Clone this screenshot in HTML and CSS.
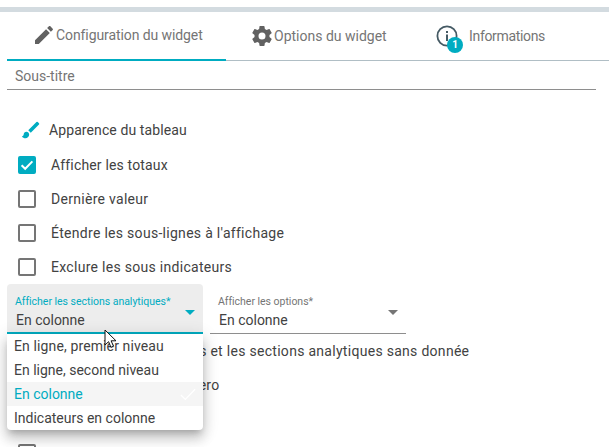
FILE: index.html
```html
<!DOCTYPE html>
<html lang="fr">
<head>
<meta charset="utf-8">
<title>Configuration du widget</title>
<link rel="stylesheet" href="styles.css">
</head>
<body>
<div class="page">
  <div class="topbar"></div>
  <nav class="tabs">
    <div class="tab tab-active">
      <svg class="tab-icon" viewBox="0 0 24 24"><path d="M20.71 7.04c.39-.39.39-1.04 0-1.41l-2.34-2.34c-.37-.39-1.02-.39-1.41 0l-1.84 1.83 3.75 3.75M3 17.25V21h3.75L17.81 9.93l-3.75-3.75L3 17.25z"/></svg>
      <span>Configuration du widget</span>
    </div>
    <div class="tab tab-options">
      <svg class="tab-icon" viewBox="0 0 24 24"><path d="M12 15.5A3.5 3.5 0 0 1 8.5 12 3.5 3.5 0 0 1 12 8.5a3.5 3.5 0 0 1 3.5 3.5 3.5 3.5 0 0 1-3.5 3.5m7.43-2.53c.04-.32.07-.64.07-.97s-.03-.66-.07-1l2.11-1.63c.19-.15.24-.42.12-.64l-2-3.46c-.12-.22-.39-.31-.61-.22l-2.49 1c-.52-.39-1.06-.73-1.69-.98l-.37-2.65A.506.506 0 0 0 14 2h-4c-.25 0-.46.18-.5.42l-.37 2.65c-.63.25-1.17.59-1.69.98l-2.49-1c-.22-.09-.49 0-.61.22l-2 3.46c-.13.22-.07.49.12.64L4.57 11c-.04.34-.07.67-.07 1s.03.65.07.97l-2.11 1.66c-.19.15-.25.42-.12.64l2 3.46c.12.22.39.3.61.22l2.49-1.01c.52.4 1.06.74 1.69.99l.37 2.65c.04.24.25.42.5.42h4c.25 0 .46-.18.5-.42l.37-2.65c.63-.26 1.17-.59 1.69-.99l2.49 1.01c.22.08.49 0 .61-.22l2-3.46c.12-.22.07-.49-.12-.64l-2.11-1.66z"/></svg>
      <span>Options du widget</span>
    </div>
    <div class="tab tab-info">
      <span class="info-icon">
        <svg viewBox="0 0 24 24"><circle cx="12" cy="12" r="9.6" fill="none" stroke="#455a64" stroke-width="1.8"/><rect x="11" y="10.5" width="2" height="6.5" fill="#455a64"/><rect x="11" y="7" width="2" height="2" fill="#455a64"/></svg>
        <span class="badge">1</span>
      </span>
      <span class="info-text">Informations</span>
    </div>
  </nav>

  <div class="subtitle">Sous-titre</div>

  <div class="section-title">
    <svg class="brush" viewBox="0 0 24 24"><path d="M7 14c-1.66 0-3 1.34-3 3 0 1.31-1.16 2-2 2 .92 1.22 2.49 2 4 2 2.21 0 4-1.79 4-4 0-1.66-1.34-3-3-3zm13.71-9.37-1.34-1.34a.996.996 0 0 0-1.41 0L9 12.25 11.75 15l8.96-8.96a.996.996 0 0 0 0-1.41z"/></svg>
    <span>Apparence du tableau</span>
  </div>

  <div class="check-row">
    <span class="box box-on"><svg viewBox="0 0 18 18"><path d="M3.6 9.2l3.6 3.6 7.2-7.4" fill="none" stroke="#fff" stroke-width="2"/></svg></span>
    <span class="row-text-tight">Afficher les totaux</span>
  </div>
  <div class="check-row"><span class="box"></span><span>Dernière valeur</span></div>
  <div class="check-row"><span class="box"></span><span>Étendre les sous-lignes à l'affichage</span></div>
  <div class="check-row"><span class="box"></span><span>Exclure les sous indicateurs</span></div>

  <div class="selects">
    <div class="select select-open">
      <label class="select-label">Afficher les sections analytiques*</label>
      <div class="select-value">En colonne</div>
      <span class="arrow"></span>
      <ul class="menu">
        <li>En ligne, premier niveau</li>
        <li>En ligne, second niveau</li>
        <li class="selected">En colonne
          <svg class="tick" viewBox="0 0 18 14"><path d="M1 7.5l5 5L17 1" fill="none" stroke="#fff" stroke-width="1.5"/></svg>
        </li>
        <li>Indicateurs en colonne</li>
      </ul>
    </div>
    <div class="select">
      <label class="select-label">Afficher les options*</label>
      <div class="select-value">En colonne</div>
      <span class="arrow"></span>
    </div>
  </div>

  <div class="check-row"><span class="box"></span><span>Masquer les indicateurs et les sections analytiques sans donnée</span></div>
  <div class="check-row"><span class="box"></span><span>Afficher les valeurs à zero</span></div>
  <div class="check-row"><span class="box"></span><span></span></div>
  <div class="check-row"><span class="box"></span><span></span></div>

  <svg class="cursor" viewBox="0 0 13 20"><path d="M1 1v15l3.6-3.3 2.3 5.6 2.6-1.1-2.4-5.4H12z" fill="#fff" stroke="#111" stroke-width="1"/></svg>
</div>
</body>
</html>
```
FILE: styles.css
```css
* { box-sizing: border-box; }
html, body { margin: 0; padding: 0; height: 100%; overflow: hidden; background: #fff; }
body { font-family: Roboto, "Liberation Sans", sans-serif; font-size: 14px; color: #424242; }
.page { position: relative; width: 609px; height: 447px; overflow: hidden; padding-top: 7px; }
.topbar { height: 5px; background: #d3dbe0; }

.tabs { display: flex; height: 49px; margin-left: 7px; border-bottom: 1px solid #b0bec5; color: #757575; }
.tab { display: flex; align-items: center; height: 49px; padding-bottom: 1px; }
.tab-active { width: 219px; padding-left: 25px; letter-spacing: -.09px; border-bottom: 2px solid #00acc1; }
.tab-icon { width: 24px; height: 24px; fill: #616161; flex: none; }
.tab-options { width: 194px; padding-left: 24px; }
.tab-info { padding-left: 15px; }
.info-icon { position: relative; width: 24px; height: 24px; margin-right: 10px; }
.info-icon svg { width: 24px; height: 24px; display: block; }
.info-text { letter-spacing: -.33px; }
.badge { position: absolute; left: 12px; top: 13px; width: 16px; height: 16px; border-radius: 50%; background: #00acc1; color: #fff; font-size: 10px; font-weight: 700; line-height: 16px; text-align: center; }

.subtitle { margin: 0 13px 0 7px; height: 29px; padding: 7px 0 0 8px; border-bottom: 1px solid #8e8e8e; color: #757575; line-height: 16px; }

.section-title { display: flex; align-items: center; height: 24px; margin: 28px 0 0 20px; letter-spacing: .1px; }
.brush { width: 22px; height: 22px; fill: #00acc1; margin-right: 7px; }

.check-row { display: flex; align-items: center; height: 34px; padding-left: 18px; letter-spacing: .29px; }
.row-text-tight { letter-spacing: .16px; }
.section-title + .check-row { margin-top: 6px; }
.box { width: 18px; height: 18px; margin-right: 15px; border: 2px solid #757575; border-radius: 2px; flex: none; }
.box-on { background: #00acc1; border-color: #00acc1; padding: 0; }
.box-on svg { display: block; width: 18px; height: 18px; margin: -2px; }

.selects { display: flex; gap: 7px; margin-left: 7px; height: 50px; }
.select { position: relative; width: 196px; height: 50px; padding: 12px 8px 0 8px; border-bottom: 1px solid #8e8e8e; }
.select-label { display: block; font-size: 10.5px; line-height: 12px; color: #757575; letter-spacing: -.02px; }
.select-value { margin-top: 3px; padding-left: 1px; line-height: 18px; color: #424242; }
.select-open { background: #ededed; border-radius: 4px 4px 0 0; border-bottom: 2px solid #00acc1; }
.select-open .select-label { color: #00acc1; }
.arrow { position: absolute; right: 8px; top: 26px; width: 0; height: 0; border-left: 5px solid transparent; border-right: 5px solid transparent; border-top: 5px solid #757575; }
.select-open .arrow { border-top-color: #00acc1; }

.menu { position: absolute; left: 0; top: 50px; z-index: 2; width: 196px; margin: 0; padding: 0; list-style: none; background: #fff; border-radius: 0 0 4px 4px; box-shadow: 0 5px 6px -3px rgba(0,0,0,.2), 0 9px 12px 1px rgba(0,0,0,.14), 0 3px 16px 2px rgba(0,0,0,.12); }
.menu li { position: relative; height: 24px; line-height: 24px; padding-left: 7px; color: #424242; }
.menu li:first-child { letter-spacing: .12px; }
.menu .selected { background: #f5f5f5; color: #00acc1; }
.tick { position: absolute; right: 7px; top: 6px; width: 16px; height: 13px; }

.cursor { position: absolute; z-index: 3; left: 104px; top: 329px; width: 13px; height: 20px; }
```
